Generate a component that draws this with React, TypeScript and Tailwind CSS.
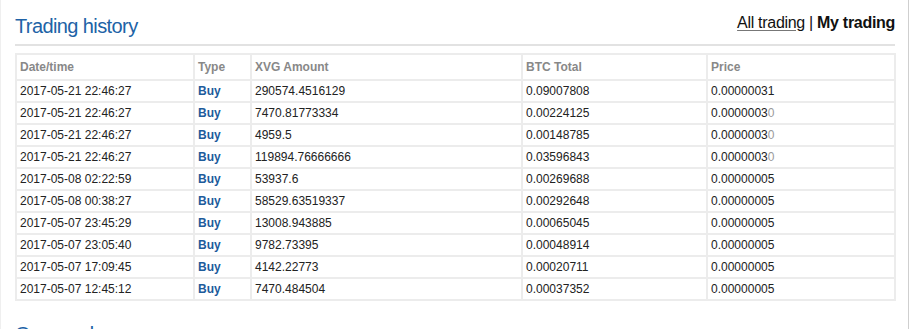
import React from 'react'

type Trade = {
  date: string
  type: string
  amount: string
  total: string
  price: string
  priceTail?: string
}

const trades: Trade[] = [
  { date: '2017-05-21 22:46:27', type: 'Buy', amount: '290574.4516129', total: '0.09007808', price: '0.00000031' },
  { date: '2017-05-21 22:46:27', type: 'Buy', amount: '7470.81773334', total: '0.00224125', price: '0.0000003', priceTail: '0' },
  { date: '2017-05-21 22:46:27', type: 'Buy', amount: '4959.5', total: '0.00148785', price: '0.0000003', priceTail: '0' },
  { date: '2017-05-21 22:46:27', type: 'Buy', amount: '119894.76666666', total: '0.03596843', price: '0.0000003', priceTail: '0' },
  { date: '2017-05-08 02:22:59', type: 'Buy', amount: '53937.6', total: '0.00269688', price: '0.00000005' },
  { date: '2017-05-08 00:38:27', type: 'Buy', amount: '58529.63519337', total: '0.00292648', price: '0.00000005' },
  { date: '2017-05-07 23:45:29', type: 'Buy', amount: '13008.943885', total: '0.00065045', price: '0.00000005' },
  { date: '2017-05-07 23:05:40', type: 'Buy', amount: '9782.73395', total: '0.00048914', price: '0.00000005' },
  { date: '2017-05-07 17:09:45', type: 'Buy', amount: '4142.22773', total: '0.00020711', price: '0.00000005' },
  { date: '2017-05-07 12:45:12', type: 'Buy', amount: '7470.484504', total: '0.00037352', price: '0.00000005' },
]

const th = 'border-2 border-[#ececec] pl-[3px] py-[5px] text-left font-bold text-[#888888] leading-[14px]'
const td = 'border-2 border-[#ececec] pl-[3px] py-[3px] leading-[14px]'

export default function App() {
  return (
    <div className="w-[911px] h-[329px] overflow-hidden bg-white">
      <div
        className="w-[909px] h-full border-l border-r border-l-[#efefef] border-r-[#cfcfcf] pl-[14px] pr-[13px] pt-[13px]"
        style={{ fontFamily: '"Liberation Sans", Arial, sans-serif' }}
      >
        {/* Header */}
        <div className="flex justify-between items-start border-b-2 border-[#e2e2e2] pb-[6px]">
          <h2 className="mt-[1px] text-[20px] leading-[24px] tracking-[-0.6px] text-[#2062a6] font-normal">
            Trading history
          </h2>
          <div className="text-[16px] leading-[20px] tracking-[-0.3px] text-[#111111]">
            <a className="underline decoration-[#777777] underline-offset-2 cursor-pointer">All trading</a>
            <span> | </span>
            <span className="font-bold">My trading</span>
          </div>
        </div>

        {/* Table */}
        <table className="mt-[7px] w-[879px] table-fixed border-collapse text-[12px] text-[#222222]">
          <colgroup>
            <col className="w-[178px]" />
            <col className="w-[57px]" />
            <col className="w-[271px]" />
            <col className="w-[185px]" />
            <col className="w-[188px]" />
          </colgroup>
          <thead>
            <tr>
              <th className={th}>Date/time</th>
              <th className={th}>Type</th>
              <th className={th}>XVG Amount</th>
              <th className={th}>BTC Total</th>
              <th className={th}>Price</th>
            </tr>
          </thead>
          <tbody>
            {trades.map((t, i) => (
              <tr key={i}>
                <td className={td}>{t.date}</td>
                <td className={`${td} font-bold text-[#1d5b9b]`}>{t.type}</td>
                <td className={td}>{t.amount}</td>
                <td className={td}>{t.total}</td>
                <td className={td}>
                  {t.price}
                  {t.priceTail && <span className="text-[#9a9a9a]">{t.priceTail}</span>}
                </td>
              </tr>
            ))}
          </tbody>
        </table>

        <h2 className="mt-[21px] text-[20px] leading-[24px] tracking-[-0.6px] text-[#2062a6] font-normal">
          Open orders
        </h2>
      </div>
    </div>
  )
}
